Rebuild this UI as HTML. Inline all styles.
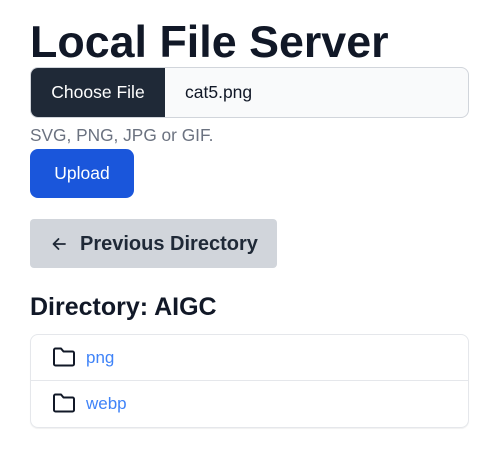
<!DOCTYPE html>
<html><head><style>
body{margin:0;background:#fff;font-family:"Liberation Sans",sans-serif;width:498px;height:472px;overflow:hidden;position:relative}
.a{position:absolute}
h1{position:absolute;left:30px;top:20px;margin:0;font-size:44.8px;line-height:45px;font-weight:bold;color:#111827}
.file{left:30px;top:67px;width:437px;height:49px;border:1px solid #d1d5db;border-radius:8px;background:#f9fafb;overflow:hidden}
.choose{position:absolute;left:0;top:0;width:134px;height:49px;background:#1f2937;color:#fff;font-size:17.5px;line-height:49px;text-align:center}
.fname{position:absolute;left:154px;top:0;line-height:49px;font-size:17.5px;color:#111827}
.help{left:30px;top:125px;font-size:17.3px;color:#6b7280}
.up{left:30px;top:149px;width:104px;height:49px;background:#1a56db;border-radius:8px;color:#fff;font-size:17.5px;line-height:49px;text-align:center}
.prev{left:30px;top:219px;width:247px;height:49px;background:#d1d5db;border-radius:4px;color:#1f2937;font-size:20px;font-weight:bold;line-height:51px}
.dir{left:30px;top:293px;font-size:25px;font-weight:bold;color:#111827}
.list{left:30px;top:334px;width:437px;height:92px;border:1px solid #e5e7eb;border-radius:8px;box-shadow:0 1px 1px rgba(0,0,0,0.06)}
.row{position:absolute;left:0;width:437px;height:45px}
.row span{position:absolute;left:55px;top:0;line-height:45px;font-size:17px;color:#3f83f8}
.row svg{position:absolute;left:21px;top:11px}
</style></head><body>
<h1>Local File Server</h1>
<div class="a file"><div class="choose">Choose File</div><div class="fname">cat5.png</div></div>
<div class="a help">SVG, PNG, JPG or GIF.</div>
<div class="a up">Upload</div>
<div class="a prev">
<svg class="a" style="left:21px;top:17px" width="16" height="16" viewBox="0 0 16 16" fill="none" stroke="#1f2937" stroke-width="1.8" stroke-linecap="round" stroke-linejoin="round"><path d="M14 8H2.5M7.5 3L2.5 8l5 5"/></svg>
<span style="position:absolute;left:50px">Previous Directory</span></div>
<div class="a dir">Directory: AIGC</div>
<div class="a list">
<div class="row" style="top:0;border-bottom:1px solid #e5e7eb"><svg width="24" height="22" viewBox="0 0 24 22" fill="none" stroke="#111827" stroke-width="2" stroke-linejoin="round"><path d="M2 4a1.5 1.5 0 0 1 1.5-1.5H9l2.5 3h9A1.5 1.5 0 0 1 22 7v11a1.5 1.5 0 0 1-1.5 1.5h-17A1.5 1.5 0 0 1 2 18z"/></svg><span>png</span></div>
<div class="row" style="top:46px"><svg width="24" height="22" viewBox="0 0 24 22" fill="none" stroke="#111827" stroke-width="2" stroke-linejoin="round"><path d="M2 4a1.5 1.5 0 0 1 1.5-1.5H9l2.5 3h9A1.5 1.5 0 0 1 22 7v11a1.5 1.5 0 0 1-1.5 1.5h-17A1.5 1.5 0 0 1 2 18z"/></svg><span>webp</span></div>
</div>
</body></html>
